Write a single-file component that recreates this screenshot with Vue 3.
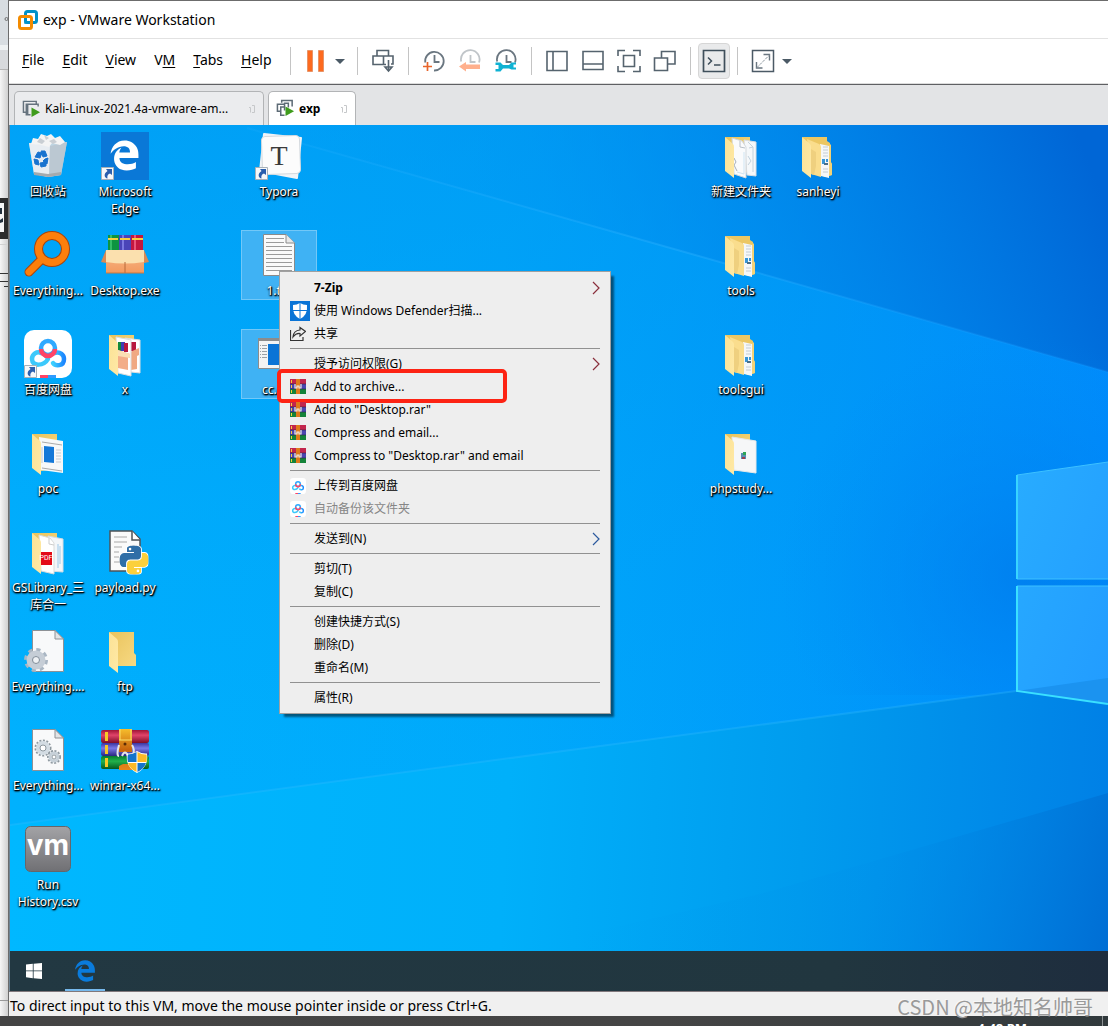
<script setup>
const menus = [
  { pre: '', key: 'F', post: 'ile' },
  { pre: '', key: 'E', post: 'dit' },
  { pre: '', key: 'V', post: 'iew' },
  { pre: 'V', key: 'M', post: '' },
  { pre: '', key: 'T', post: 'abs' },
  { pre: '', key: 'H', post: 'elp' },
]

const snapshotTools = [
  { icon: 'snap-take', label: 'Take snapshot' },
  { icon: 'snap-revert', label: 'Revert to snapshot' },
  { icon: 'snap-manage', label: 'Manage snapshots' },
]

const viewTools = [
  { icon: 'view-library', label: 'Library' },
  { icon: 'view-thumbs', label: 'Thumbnail bar' },
  { icon: 'view-full', label: 'Full screen' },
  { icon: 'view-unity', label: 'Unity' },
]

const desktopItems = [
  { col: 1, row: 1, icon: 'bin', label: '回收站' },
  { col: 1, row: 2, icon: 'everything', label: 'Everything...' },
  { col: 1, row: 3, icon: 'baidu', label: '百度网盘', shortcut: true },
  { col: 1, row: 4, icon: 'folder-poc', label: 'poc' },
  { col: 1, row: 5, icon: 'folder-pdf', label: 'GSLibrary_三库合一', mark: 'PDF' },
  { col: 1, row: 6, icon: 'ini', label: 'Everything....' },
  { col: 1, row: 7, icon: 'config', label: 'Everything...' },
  { col: 1, row: 8, icon: 'vm', label: 'Run History.csv', mark: 'vm' },
  { col: 2, row: 1, icon: 'edge-tile', label: 'Microsoft Edge', shortcut: true },
  { col: 2, row: 2, icon: 'sfx', label: 'Desktop.exe' },
  { col: 2, row: 3, icon: 'folder-x', label: 'x' },
  { col: 2, row: 5, icon: 'python', label: 'payload.py' },
  { col: 2, row: 6, icon: 'folder-ftp', label: 'ftp' },
  { col: 2, row: 7, icon: 'winrar-setup', label: 'winrar-x64...' },
  { col: 4, row: 1, icon: 'typora', label: 'Typora', shortcut: true, mark: 'T' },
  { col: 4, row: 2, icon: 'txt', label: '1.txt', selected: true },
  { col: 4, row: 3, icon: 'exe', label: 'cc.exe', selected: true },
  { col: 10, row: 1, icon: 'folder-docs', label: '新建文件夹' },
  { col: 10, row: 2, icon: 'folder-tools', label: 'tools' },
  { col: 10, row: 3, icon: 'folder-tools', label: 'toolsgui' },
  { col: 10, row: 4, icon: 'folder-php', label: 'phpstudy...' },
  { col: 11, row: 1, icon: 'folder-tools', label: 'sanheyi' },
]

const contextGroups = [
  [
    { label: '7-Zip', bold: true, sub: true },
    { label: '使用 Windows Defender扫描...', icon: 'defender', big: true },
    { label: '共享', icon: 'share' },
  ],
  [
    { label: '授予访问权限(G)', sub: true },
    { label: 'Add to archive...', icon: 'winrar', marked: true },
    { label: 'Add to "Desktop.rar"', icon: 'winrar' },
    { label: 'Compress and email...', icon: 'winrar' },
    { label: 'Compress to "Desktop.rar" and email', icon: 'winrar' },
  ],
  [
    { label: '上传到百度网盘', icon: 'baidu' },
    { label: '自动备份该文件夹', icon: 'baidu', disabled: true },
  ],
  [{ label: '发送到(N)', sub: true }],
  [{ label: '剪切(T)' }, { label: '复制(C)' }],
  [{ label: '创建快捷方式(S)' }, { label: '删除(D)' }, { label: '重命名(M)' }],
  [{ label: '属性(R)' }],
]
</script>

<template>
  <div class="screen">
    <svg class="sprite" aria-hidden="true">
      <defs>
        <linearGradient id="gFlap" x1="0" y1="0" x2="1" y2="1">
          <stop offset="0" stop-color="#fbe295" /><stop offset="1" stop-color="#ffe9a6" />
        </linearGradient>
        <linearGradient id="gBack" x1="0" y1="0" x2="1" y2="1">
          <stop offset="0" stop-color="#e9c35c" /><stop offset="1" stop-color="#f7d983" />
        </linearGradient>
        <linearGradient id="gRed" x1="0" y1="0" x2="0" y2="1">
          <stop offset="0" stop-color="#a01536" /><stop offset=".4" stop-color="#e0446a" /><stop offset="1" stop-color="#7d0d28" />
        </linearGradient>
        <linearGradient id="gBlue" x1="0" y1="0" x2="0" y2="1">
          <stop offset="0" stop-color="#3a35a0" /><stop offset=".4" stop-color="#7a78e6" /><stop offset="1" stop-color="#2a2680" />
        </linearGradient>
        <linearGradient id="gGreen" x1="0" y1="0" x2="0" y2="1">
          <stop offset="0" stop-color="#087a2c" /><stop offset=".4" stop-color="#22b14c" /><stop offset="1" stop-color="#065a20" />
        </linearGradient>
        <linearGradient id="gStrap" x1="0" y1="0" x2="0" y2="1">
          <stop offset="0" stop-color="#f6bd2c" /><stop offset=".5" stop-color="#c8650e" /><stop offset="1" stop-color="#e8861c" />
        </linearGradient>
        <linearGradient id="gVm" x1="0" y1="0" x2="0" y2="1">
          <stop offset="0" stop-color="#a3a3a6" /><stop offset="1" stop-color="#707074" />
        </linearGradient>
        <linearGradient id="gBox" x1="0" y1="0" x2="0" y2="1">
          <stop offset="0" stop-color="#f6b98c" /><stop offset="1" stop-color="#f39a5e" />
        </linearGradient>
        <linearGradient id="gBd" x1="0" y1="0" x2="1" y2="0">
          <stop offset="0" stop-color="#3dd0ff" /><stop offset="1" stop-color="#1c86ff" />
        </linearGradient>
      </defs>

      <symbol id="vmware" viewBox="0 0 20 20">
        <rect x="7.500" y="1.500" width="11" height="11" rx="2" fill="none" stroke="#0091c9" stroke-width="3" />
        <rect x="1.500" y="6.500" width="12" height="12" rx="2" fill="none" stroke="#f38b00" stroke-width="3" />
        <path d="M7.500 8V12.500H12" fill="none" stroke="#0091c9" stroke-width="2.500" />
      </symbol>
      <symbol id="tab-vm" viewBox="0 0 20 20">
        <path d="M4 14H1.500V2.500H15V5M6 16.500H4.500V5.500H17V8M6 5.500V16.500H9" fill="none" stroke="#66737e" stroke-width="1.500" />
        <path d="M10 9 19 14 10 19Z" fill="#3f9c1c" />
      </symbol>
      <symbol id="tab-vms" viewBox="0 0 20 20">
        <path d="M6 4V1.500H17V8M5 13H1.500V5.500H9M5 10V17H9M5 12V8.500H9M9 12V4.500H13V9" fill="none" stroke="#5d6b76" stroke-width="1.600" />
        <path d="M10 8 19 13 10 18Z" fill="#3f9c1c" />
      </symbol>
      <symbol id="pin" viewBox="0 0 6 10">
        <path d="M0 3.500H1.500V8.500M3 1.500H5.500V8.500H3" fill="none" stroke="#c6c8ca" />
      </symbol>

      <symbol id="pause" viewBox="0 0 24 24">
        <path d="M3.500 1.500h5v21h-5ZM14.500 1.500h5v21h-5Z" fill="#fd6a1f" stroke="#e79468" />
      </symbol>
      <symbol id="caret" viewBox="0 0 12 12"><path d="M1 4h10L6 9Z" fill="#4b5a66" /></symbol>
      <symbol id="cad" viewBox="0 0 24 24">
        <path d="M6 1.500h11.500V7H6ZM2 7h10.500v8.500H2ZM12.500 7H22v8H20M12.500 15.500H15M17.500 11v10M14 18l3.500 4 3.500-4Z" fill="none" stroke="#55636e" stroke-width="1.600" />
      </symbol>
      <symbol id="snap-take" viewBox="0 0 24 24">
        <path d="M3.200 13.500A9.300 9.300 0 1 1 12 21.500M12.500 6v7h5" fill="none" stroke="#6a7680" stroke-width="1.800" />
        <path d="M1 17.500h9M5.500 13v9" stroke="#e8652b" stroke-width="1.700" />
      </symbol>
      <symbol id="snap-revert" viewBox="0 0 24 24">
        <path d="M3.200 12.500A9.300 9.300 0 1 1 21 13.500M12.500 6v7h5" fill="none" stroke="#c0c5c9" stroke-width="1.800" />
        <path d="M1 17.500 8 13v2.500h14v4.500H8V22.500Z" fill="#ffb08d" />
      </symbol>
      <symbol id="snap-manage" viewBox="0 0 24 24">
        <path d="M3.200 12.500A9.300 9.300 0 1 1 21 13.500M12.500 6v7h5" fill="none" stroke="#6a7680" stroke-width="1.800" />
        <path d="M1.500 13.500H6.500L9 16H15L17.500 13.500H22V15.500H19.500V18.500H22V20.500H17.500L15 19.500H9L6.500 22.500H1.500V20H4.500V16H1.500Z" fill="#0fb2d3" />
      </symbol>
      <symbol id="view-library" viewBox="0 0 24 24">
        <path d="M2 2.500h20v19H2ZM8 2.500v19" fill="none" stroke="#55636e" stroke-width="1.600" />
      </symbol>
      <symbol id="view-thumbs" viewBox="0 0 24 24">
        <path d="M2 2.500h20v18H2ZM2 15h20" fill="none" stroke="#55636e" stroke-width="1.600" />
      </symbol>
      <symbol id="view-full" viewBox="0 0 24 24">
        <path d="M1 7V1.500H8M16 1.500h7V7M23 17v5.500H16M8 22.500H1V17M6.500 6.500h11v11h-11Z" fill="none" stroke="#55636e" stroke-width="1.600" />
      </symbol>
      <symbol id="view-unity" viewBox="0 0 24 24">
        <path d="M1.500 9h13v12.500h-13ZM8.500 9V2.500H22V15H15" fill="none" stroke="#55636e" stroke-width="1.600" />
      </symbol>
      <symbol id="console" viewBox="0 0 24 24">
        <path d="M1.500 1.500h21v21h-21Z" fill="none" stroke="#3f4f5b" stroke-width="1.700" />
        <path d="M6 8.500l3.500 3.500L6 15.500M12 16h6.500" fill="none" stroke="#3f4f5b" stroke-width="1.500" />
      </symbol>
      <symbol id="expand" viewBox="0 0 24 24">
        <path d="M1.500 1.500h21v21h-21Z" fill="none" stroke="#4b5a66" stroke-width="1.500" />
        <path d="M12.500 5.500H18.500V11.500M5.500 13V19H11.500" fill="none" stroke="#6a7680" stroke-width="1.400" />
        <path d="M6 18.500 18.500 6" stroke="#8d979f" stroke-dasharray="3 1" />
      </symbol>

      <symbol id="edge" viewBox="0 0 512 512">
        <path fill="currentColor" d="M486.290 243.670c0-44.030-7.760-84.460-28.810-122.400C416.500 47.880 343.910 8 258.890 8 119 7.720 40.620 113.210 26.040 227.690c42.420-61.310 117.070-121.380 220.370-125 0 0 109.670 0 99.420 105H170c6.370-37.390 18.550-58.990 34.340-78.930-75.050 34.900-121.850 96.100-120.750 188.320.830 71.450 50.130 144.840 120.750 172 83.350 31.840 192.770 7.200 240.130-21.330V363.310c-80.870 56.490-270.870 60.920-272.260-67.570h314.210v-52.070z" />
      </symbol>
      <symbol id="winflag" viewBox="0 0 16 16">
        <path fill="#fff" d="M0 1.500 6.800.800V7.500H0ZM7.600.700 16 0V7.500H7.600ZM0 8.300H6.800V15.200L0 14.300ZM7.600 8.300H16V16L7.600 15.300Z" />
      </symbol>
      <symbol id="shortcut" viewBox="0 0 13 13">
        <path d="M.500.500h12v12H.500Z" fill="#f6f8fa" stroke="#a9b1b8" />
        <path d="M5 2h6v6L9 6.500C6.500 7.500 6 9 6.500 11.500 3.500 11 2 7 6.500 4Z" fill="#2b5fae" />
      </symbol>

      <symbol id="bin" viewBox="0 0 48 48">
        <path d="M5 11 43 10 37 43 24 45 10 42Z" fill="#d4dbe1" opacity=".9" />
        <path d="M5 11 26 14 25 45 10 42Z" fill="#eef1f4" opacity=".85" />
        <path d="M26 14 43 10 37 43 25 45Z" fill="#b9c3cc" opacity=".75" />
        <path d="M7 12 9 6 14 7 17 2 23 4 27 2 31 6 36 4 41 10 36 13 28 11 25 15 17 13Z" fill="#f4f4f4" />
        <path d="M13 10 16 6 21 9 18 12ZM25 9 30 7 33 10 29 12ZM20 3 25 6 22 8Z" fill="#c9ced3" />
        <path d="M10 43 24 45 37 43 37 40 24 42 10 40Z" fill="#a5aaae" />
        <path d="M11 25 14 20 18 21 16 26ZM17 19h4l2 5-4 1ZM10 27l4 1 1 5-4-1ZM16 31l6-1v4l-5 1ZM21 27l3-1-1 6-4-3Z" fill="#1873cf" stroke="#1873cf" />
      </symbol>
      <symbol id="everything" viewBox="0 0 48 48">
        <path d="M18 28 5 41" stroke="#a9440a" stroke-width="9" stroke-linecap="round" />
        <circle cx="28" cy="18" r="13.500" fill="none" stroke="#a9440a" stroke-width="9" />
        <path d="M18 28 5 41" stroke="#fd7f0b" stroke-width="7" stroke-linecap="round" />
        <circle cx="28" cy="18" r="13.500" fill="none" stroke="#fd7f0b" stroke-width="7" />
      </symbol>
      <symbol id="baidu" viewBox="0 0 48 48">
        <rect width="48" height="48" rx="10" fill="#fff" />
        <path d="M24 29C20 36 8 37 8 29c0-5 5-8 9-6" fill="none" stroke="#3cc9fb" stroke-width="4.500" stroke-linecap="round" />
        <path d="M31 23c5-2 9 2 9 6 0 8-9 7-11 4" fill="none" stroke="url(#gBd)" stroke-width="4.500" stroke-linecap="round" />
        <path d="M17 22q6 6 7 7" stroke="#3cc9fb" stroke-width="3" fill="none" />
        <circle cx="24" cy="18" r="7" fill="none" stroke="#2fa9ff" stroke-width="4.500" />
        <path d="M17 19a7 7 0 0 0 14 0" fill="none" stroke="#ff4466" stroke-width="4.500" />
        <path d="M16 45h8v3h-8Z" fill="#ff4466" /><path d="M24 45h8v3h-8Z" fill="#2f9bff" />
      </symbol>

      <symbol id="folder-back" viewBox="0 0 48 48"><path d="M8 5H33V40L17 42Z" fill="url(#gBack)" /></symbol>
      <symbol id="folder-flap" viewBox="0 0 48 48"><path d="M8 5 16 12Q17 13 17 15V46L8 39Z" fill="url(#gFlap)" /></symbol>
      <symbol id="folder-ftp" viewBox="0 0 48 48">
        <path d="M8 5H33V26L35 28V39H17Z" fill="url(#gBack)" /><use href="#folder-flap" />
      </symbol>
      <symbol id="folder-poc" viewBox="0 0 48 48">
        <use href="#folder-back" />
        <path d="M15 8 39 12V44L17 41Z" fill="#f7f8f9" />
        <path d="M18 13 38 16M18 39 38 42" stroke="#aaa" />
        <path d="M20 17 30 18V34L20 33Z" fill="#1478d8" />
        <path d="M18 18V34M32 21h5M32 24h5M32 27h5M32 30h5M32 33h5" stroke="#c7cbd0" />
        <use href="#folder-flap" />
      </symbol>
      <symbol id="folder-pdf" viewBox="0 0 48 48">
        <use href="#folder-back" />
        <path d="M24 8 39 11V44L25 43Z" fill="#f3f6f9" stroke="#d5dbe2" />
        <path d="M34 16v24M36 18v18" stroke="#9cc8e8" />
        <path d="M15 7 26 10 30 15V46L17 43Z" fill="#fff" stroke="#dadada" />
        <path d="M25 10v6l5 1" fill="none" stroke="#ccc" />
        <path d="M16 24h12v13H16Z" fill="#e30a17" />
        <use href="#folder-flap" />
      </symbol>
      <symbol id="folder-x" viewBox="0 0 48 48">
        <use href="#folder-back" />
        <path d="M24 8 39 10V43L30 42Z" fill="#fff" stroke="#ddd" />
        <path d="M30 12h5v9h-5Z" fill="#b8183e" /><path d="M29 22 38 18V25L36 26V39L30 40Z" fill="#f0a983" />
        <path d="M15 7 30 10V46L17 43Z" fill="#fff" stroke="#ddd" />
        <path d="M17 12h4v9h-4Z" fill="#138a3b" /><path d="M20 12h4v9h-4Z" fill="#403cb4" /><path d="M23 13h4v9h-4Z" fill="#b8183e" />
        <path d="M17 20 29 24V28L27 27V40L17 38Z" fill="#f3ae88" /><path d="M17 20 29 24V28L17 26Z" fill="#fbe0b4" />
        <use href="#folder-flap" />
      </symbol>
      <symbol id="folder-docs" viewBox="0 0 48 48">
        <use href="#folder-back" />
        <path d="M27 8 39 10V44L30 43Z" fill="#f5f8fa" stroke="#d8dde2" />
        <path d="M31 10l5 5-4 1M36 15v25M31 24l3 5-3 4" fill="none" stroke="#c3d2dd" />
        <path d="M15 6 25 9 29 15V46L17 42Z" fill="#fafbfc" stroke="#d3d8dc" />
        <path d="M23 9v6l5 1" fill="none" stroke="#b8c0c8" />
        <path d="M17 26l2 4-2 3 3 6" fill="none" stroke="#a8b0b8" />
        <path d="M20 40l7 2V20" fill="none" stroke="#cfe4f2" />
        <use href="#folder-flap" />
      </symbol>
      <symbol id="folder-tools" viewBox="0 0 48 48">
        <path d="M8 5H33V9L36 11V30L38 32V43L30 45Z" fill="#ecc763" />
        <path d="M26 12 35 14V46L27 44Z" fill="#f5f7f8" />
        <path d="M29 15h5M29 18h5M29 21h5M29 24h5M29 37h5M29 40h5" stroke="#c4cdd4" />
        <path d="M28 27h3v5h-3ZM32 27h2v3h-2Z" fill="#3996d4" /><path d="M30 31h4v2h-4Z" fill="#4b6f88" />
        <path d="M35 14 37 12V30L38 32V43L35 44Z" fill="#f3d277" />
        <path d="M13 7 25 12Q27 13 27 15V45L17 42Z" fill="#fadd8d" />
        <path d="M17 17 22 20V34L20 43 17 42Z" fill="#efd07f" />
        <use href="#folder-flap" />
      </symbol>
      <symbol id="folder-php" viewBox="0 0 48 48">
        <use href="#folder-back" />
        <path d="M15 8 39 12V44L17 41Z" fill="#f6f7f8" stroke="#e6e8ea" />
        <path d="M24 24h5v6h-5Z" fill="#5c8fb0" /><path d="M26 23h3v3h-3Z" fill="#2fa557" /><path d="M25 28h3v2h-3Z" fill="#a03c50" />
        <use href="#folder-flap" />
      </symbol>

      <symbol id="txt" viewBox="0 0 48 48">
        <path d="M8.500 3.500H31L39.500 12V44.500H8.500Z" fill="#fafafa" stroke="#8a8a8a" />
        <path d="M31 3.500V12H39.500" fill="#e8e8e8" stroke="#8a8a8a" />
        <path d="M11 7.500h18M11 11.500h18M11 15.500h26M11 19.500h26M11 23.500h26M11 27.500h26M11 31.500h26M11 35.500h26M11 39.500h26" stroke="#9b9b9b" />
      </symbol>
      <symbol id="exe" viewBox="0 0 48 48">
        <path d="M3.500 8.500h41v30h-41Z" fill="#f3f3f3" stroke="#8c8c8c" /><path d="M3 8h42v3H3Z" fill="#8c8c8c" />
        <path d="M5 15.500h7M5 18.500h7M5 21.500h7M5 24.500h7M5 27.500h7" stroke="#9aa0a6" stroke-dasharray="1 1 5" />
        <path d="M13 14h19v21H13Z" fill="#0a74d6" /><path d="M34 16h8M34 20h8M34 24h8" stroke="#b5b9bd" />
      </symbol>
      <symbol id="doc" viewBox="0 0 48 48">
        <path d="M8.500 3.500H31L39.500 12V44.500H8.500Z" fill="#f8f9fa" stroke="#8d9196" />
        <path d="M31 3.500V12H39.500Z" fill="#e2e4e6" stroke="#8d9196" />
      </symbol>
      <symbol id="ini" viewBox="0 0 48 48">
        <use href="#doc" />
        <circle cx="12" cy="33" r="10" fill="none" stroke="#a9b6c3" stroke-width="4" stroke-dasharray="4 3.850" />
        <circle cx="12" cy="33" r="6.500" fill="none" stroke="#c5cdd6" stroke-width="6" />
        <circle cx="12" cy="33" r="3.500" fill="#eef1f4" stroke="#7f8b98" />
      </symbol>
      <symbol id="config" viewBox="0 0 48 48">
        <use href="#doc" />
        <circle cx="19" cy="22" r="7.500" fill="none" stroke="#8e989f" stroke-width="2" stroke-dasharray="2 1.500" />
        <circle cx="19" cy="22" r="5" fill="#fff" stroke="#d3dce3" stroke-width="4" />
        <circle cx="19" cy="22" r="3" fill="#fff" stroke="#8e989f" />
        <circle cx="30" cy="31" r="6" fill="none" stroke="#8e989f" stroke-width="2" stroke-dasharray="2 1.500" />
        <circle cx="30" cy="31" r="4" fill="#fff" stroke="#c6d0d8" stroke-width="3" />
        <circle cx="30" cy="31" r="2" fill="#fff" stroke="#8e989f" />
      </symbol>
      <symbol id="vm" viewBox="0 0 48 48">
        <rect x="1.500" y="1.500" width="45" height="45" rx="5" fill="url(#gVm)" stroke="#66666a" />
      </symbol>
      <symbol id="edge-tile" viewBox="0 0 48 48">
        <path d="M0 0h48v48H0Z" fill="#0a78d7" />
        <svg x="8" y="7" width="31" height="33" viewBox="0 0 512 512" color="#fff"><use href="#edge" /></svg>
      </symbol>
      <symbol id="sfx" viewBox="0 0 48 48">
        <path d="M7 4h11v18H7Z" fill="#0d9440" /><path d="M9 4h2v18H9Z" fill="#35bd65" />
        <path d="M18 4h12v18H18Z" fill="#4a44b8" /><path d="M21 4h2v18h-2Z" fill="#7a78e0" />
        <path d="M30 4h12v18H30Z" fill="#c3173f" /><path d="M33 4h2v18h-2Z" fill="#ea5578" />
        <path d="M7 8h10M19 8h10M31 8h11" stroke="#f9cf3e" stroke-width="2" />
        <path d="M5 19H43V42H5Z" fill="url(#gBox)" /><path d="M5 19H43V31Q24 34 5 31Z" fill="#fbe0ae" />
        <path d="M5 19 0 31 5 32ZM43 19 48 31 43 32Z" fill="#d98a55" />
        <path d="M24 31V42" stroke="#b86a3a" /><path d="M5 42H43" stroke="#c9773f" />
      </symbol>
      <symbol id="py-half" viewBox="0 0 24 24">
        <path d="M14.250.180l.900.200.730.260.590.300.450.320.340.340.250.340.160.330.100.300.040.260.020.200-.010.130V8.500l-.050.630-.130.550-.210.460-.260.380-.300.310-.330.250-.350.190-.350.140-.330.100-.300.070-.260.040-.210.020H8.770l-.690.050-.590.140-.500.220-.410.270-.330.320-.270.350-.200.360-.150.370-.100.350-.070.320-.040.270-.020.210v3.060H3.170l-.210-.030-.280-.070-.320-.120-.350-.180-.360-.260-.360-.360-.350-.460-.320-.590-.280-.730-.210-.880-.140-1.050-.050-1.230.060-1.220.160-1.040.240-.870.320-.710.360-.570.400-.440.420-.330.420-.240.400-.160.360-.100.320-.050.240-.010h.160l.060.010h8.160v-.830H6.180l-.010-2.750-.020-.370.050-.340.110-.310.170-.280.250-.260.310-.230.380-.200.440-.180.510-.150.580-.120.640-.100.710-.060.770-.040.840-.020 1.270.050z" />
        <circle cx="8.700" cy="2.900" r="1.100" fill="#fff" stroke="none" />
      </symbol>
      <symbol id="python" viewBox="0 0 48 48">
        <path d="M9 3H31L39 11V43H9Z" fill="#fafafa" stroke="#4f5357" stroke-width="1.500" />
        <path d="M31 3V12H39" fill="#fff" stroke="#4f5357" stroke-width="1.500" />
        <path d="M13 9h13M13 14h13M13 19h8M13 24h5M13 29h5M13 34h7" stroke="#c3c3c3" stroke-width="1.500" />
        <svg x="18" y="17" width="30" height="30" viewBox="-0.500 -0.500 25 25" overflow="visible">
          <g stroke="#fff" stroke-width="1.500"><use href="#py-half" width="24" height="24" /><use href="#py-half" width="24" height="24" transform="rotate(180 12 12)" /></g>
          <use href="#py-half" width="24" height="24" fill="#2f6ea7" />
          <use href="#py-half" width="24" height="24" fill="#fbd03c" transform="rotate(180 12 12)" />
        </svg>
      </symbol>
      <symbol id="typora" viewBox="0 0 48 48">
        <path d="M9 2 46 6 42 46 5 39Z" fill="#f1f4f7" stroke="#f1f4f7" stroke-width="2" stroke-linejoin="round" />
        <rect x="7" y="4" width="38" height="38" rx="4" fill="#fcfcfc" stroke="#d4d9de" transform="rotate(-2 26 23)" />
      </symbol>
      <symbol id="winrar-setup" viewBox="0 0 48 48">
        <rect y="4" width="48" height="13" rx="2" fill="url(#gRed)" />
        <rect y="17" width="48" height="13" rx="2" fill="url(#gBlue)" />
        <rect y="30" width="48" height="13" rx="2" fill="url(#gGreen)" />
        <path d="M4 6h3v9H4ZM4 19h3v9H4ZM4 32h3v9H4Z" fill="#f9c825" />
        <path d="M18 3h13v23H18ZM18 40l4-2h9v6H18Z" fill="url(#gStrap)" />
        <path d="M19 3V14M30 3V14M18 14H31" stroke="#fce06a" /><circle cx="24" cy="18" r="1.500" fill="#5b2c06" />
        <path d="M18 19q-3 11 0 11M31 19q3 5 1 9M21 30q3-7 6 0" fill="none" stroke="#e5e5e8" stroke-width="2" />
        <path d="M36 25q5 3 10 2.500Q48 41 36 47 24 41 26 27.500 32 28 36 25Z" fill="#fff" />
        <path d="M35.500 26V36H27Q26 32 27 28.500 32 28 35.500 26ZM36.500 37H45Q43 43 36.500 46Z" fill="#1473cc" />
        <path d="M36.500 26Q41 29 45.500 28.500 46 32 45.500 36H36.500ZM35.500 37V46Q29 43 27 37Z" fill="#fdb927" />
      </symbol>

      <symbol id="winrar" viewBox="0 0 16 16">
        <path d="M0 0h16v5H0Z" fill="#c2254d" /><path d="M0 5h16v5H0Z" fill="#4b46b0" /><path d="M0 10h16v5H0Z" fill="#14833a" />
        <path d="M1 1h1v3H1ZM1 6h1v3H1ZM1 11h1v3H1Z" fill="#f8cf3a" />
        <path d="M0 5h16M0 10h16" stroke="#2c2340" stroke-width=".6" />
        <path d="M6 0h4v15H6Z" fill="#e07a1a" /><path d="M5 5v4h2V7h2v2h2V5" fill="none" stroke="#f2ece4" stroke-width="1.200" />
      </symbol>
      <symbol id="defender" viewBox="0 0 20 20">
        <path d="M0 0h20v20H0Z" fill="#0a74d6" />
        <path d="M10 2Q13 4 17 4 18 14 10 18 2 14 3 4 7 4 10 2Z" fill="#fff" /><path d="M10 2V18M2 9.500H18" stroke="#0a74d6" />
      </symbol>
      <symbol id="share" viewBox="0 0 16 16">
        <path d="M.500 4V14.500H13V11M10 1.500 15.500 5.500 10 10V7.500Q6 7 3 11 3.500 4.500 10 4Z" fill="none" stroke="#333" stroke-width="1.200" />
      </symbol>
      <symbol id="chevron" viewBox="0 0 8 14"><path d="M1 1 7 7 1 13" fill="none" stroke="currentColor" stroke-width="1.200" /></symbol>
    </svg>

    <div class="middle">
      <aside class="behind" aria-hidden="true">
        <svg width="8" height="1016" viewBox="0 0 8 1016">
          <path d="M0 0h8v45H0Z" fill="#d8dde1" /><path d="M0 45h8v5H0Z" fill="#eef1f2" />
          <path d="M0 50h8v19H0Z" fill="#d8dadd" /><path d="M0 69.500h8" stroke="#b5b5b5" />
          <circle cx="6.500" cy="19" r="1.500" fill="none" stroke="#6e6e6e" />
          <path d="M0 198h8v41H0Z" fill="#2c2c2c" /><path d="M0 203h4v29H0Z" fill="#f5f5f5" />
          <path d="M0 208h2v6H0ZM0 220l3-2v4l-3 1Z" fill="#22303c" />
          <path d="M0 244.500h8" stroke="#d2d2d2" /><path d="M0 273.500h8M0 281.500h8M4 286.500h4" stroke="#333" />
          <path d="M0 1000.500h8" stroke="#999" />
        </svg>
      </aside>

      <main class="window">
        <header class="titlebar">
          <svg width="20" height="20"><use href="#vmware" /></svg>
          <h1>exp - VMware Workstation</h1>
        </header>

        <div class="menubar">
          <nav class="menus">
            <button v-for="m in menus" :key="m.key" type="button">{{ m.pre }}<u>{{ m.key }}</u>{{ m.post }}</button>
          </nav>
          <i class="sep"></i>
          <button class="tool" type="button" aria-label="Suspend"><svg><use href="#pause" /></svg></button>
          <button class="drop" type="button" aria-label="Power options"><svg><use href="#caret" /></svg></button>
          <i class="sep"></i>
          <button class="tool" type="button" aria-label="Send Ctrl+Alt+Del"><svg><use href="#cad" /></svg></button>
          <i class="sep"></i>
          <button v-for="t in snapshotTools" :key="t.icon" class="tool" type="button" :aria-label="t.label"><svg><use :href="'#' + t.icon" /></svg></button>
          <i class="sep"></i>
          <button v-for="t in viewTools" :key="t.icon" class="tool" type="button" :aria-label="t.label"><svg><use :href="'#' + t.icon" /></svg></button>
          <i class="sep"></i>
          <button class="tool pressed" type="button" aria-label="Console view" aria-pressed="true"><svg><use href="#console" /></svg></button>
          <i class="sep"></i>
          <button class="tool" type="button" aria-label="Stretch guest"><svg><use href="#expand" /></svg></button>
          <button class="drop" type="button" aria-label="Stretch options"><svg><use href="#caret" /></svg></button>
        </div>

        <div class="tabs" role="tablist">
          <button class="tab wide" type="button" role="tab" aria-selected="false">
            <svg class="tab-icon"><use href="#tab-vm" /></svg><span>Kali-Linux-2021.4a-vmware-am...</span><svg class="pin"><use href="#pin" /></svg>
          </button>
          <button class="tab active" type="button" role="tab" aria-selected="true">
            <svg class="tab-icon"><use href="#tab-vms" /></svg><span>exp</span><svg class="pin"><use href="#pin" /></svg>
          </button>
        </div>

        <section class="guest">
          <div class="desktop">
            <svg class="wallpaper" viewBox="0 0 1098 826" preserveAspectRatio="xMaxYMid slice" aria-hidden="true">
              <defs>
                <linearGradient id="wBase" x1="0" y1="0" x2="1" y2="0">
                  <stop offset="0" stop-color="#00b1fe" /><stop offset=".45" stop-color="#00aafb" /><stop offset=".75" stop-color="#009afa" /><stop offset="1" stop-color="#008aff" />
                </linearGradient>
                <linearGradient id="wTopBand" x1="0" y1="0" x2="0" y2="1">
                  <stop offset="0" stop-color="#0090ee" stop-opacity=".45" /><stop offset=".45" stop-color="#0090f0" stop-opacity=".15" /><stop offset=".8" stop-color="#0090f0" stop-opacity="0" />
                </linearGradient>
                <linearGradient id="wUpper" gradientUnits="userSpaceOnUse" x1="250" y1="260" x2="1040" y2="-60">
                  <stop offset="0" stop-color="#009ef6" stop-opacity="0" /><stop offset=".4" stop-color="#0092f0" stop-opacity=".35" /><stop offset=".7" stop-color="#0080e6" stop-opacity=".75" /><stop offset="1" stop-color="#0066d6" />
                </linearGradient>
                <linearGradient id="wBeam" x1="0" y1="0" x2="1" y2="0">
                  <stop offset="0" stop-color="#2eb2ff" stop-opacity=".15" /><stop offset=".5" stop-color="#2eb2ff" stop-opacity=".4" /><stop offset="1" stop-color="#1a9aff" stop-opacity=".2" />
                </linearGradient>
                <linearGradient id="wLower" gradientUnits="userSpaceOnUse" x1="0" y1="700" x2="1098" y2="760">
                  <stop offset="0" stop-color="#00b8ff" /><stop offset=".45" stop-color="#00b0fa" /><stop offset=".72" stop-color="#009cee" /><stop offset="1" stop-color="#0080e6" />
                </linearGradient>
                <linearGradient id="wCorner" gradientUnits="userSpaceOnUse" x1="600" y1="700" x2="1098" y2="826">
                  <stop offset="0" stop-color="#0098ee" stop-opacity="0" /><stop offset=".5" stop-color="#0090ea" stop-opacity=".25" /><stop offset="1" stop-color="#006ed4" />
                </linearGradient>
                <radialGradient id="wShade" cx="1010" cy="450" r="240" gradientUnits="userSpaceOnUse">
                  <stop offset="0" stop-color="#0078e8" stop-opacity=".6" /><stop offset="1" stop-color="#0088f0" stop-opacity="0" />
                </radialGradient>
                <linearGradient id="wPane" x1="0" y1="0" x2="1" y2="1">
                  <stop offset="0" stop-color="#28acff" /><stop offset="1" stop-color="#229cff" />
                </linearGradient>
              </defs>
              <path d="M0 0H1098V826H0Z" fill="url(#wBase)" />
              <path d="M0 0H1098V826H0Z" fill="url(#wTopBand)" />
              <path d="M226 0H1098V247Z" fill="url(#wUpper)" />
              <path d="M237 3 1098 247" stroke="url(#wBeam)" stroke-width="2" />
              <path d="M700 200H1098V570H700Z" fill="url(#wShade)" />
              <path d="M0 700 598 620 1006 566 1098 554V826H0Z" fill="url(#wLower)" />
              <path d="M0 700 598 620 1006 566" fill="none" stroke="#35bcff" stroke-width="2" opacity=".3" />
              <path d="M500 826 750 769 1098 668V826Z" fill="url(#wCorner)" />
              <path d="M1007 350 1098 337V454H1007ZM1007 461H1098V579L1007 566Z" fill="url(#wPane)" />
              <path d="M1007 566 1098 553V579Z" fill="#1b93f0" />
              <path d="M1098 337 1007 350V454H1098M1098 461H1007" fill="none" stroke="#3cc0ff" />
              <path d="M1007 461V566L1098 579" fill="none" stroke="#3ae0ff" stroke-width="2" />
              <path d="M1007 350V454" stroke="#38d4ff" stroke-width="2" />
            </svg>

            <ul class="icons">
              <li v-for="(item, i) in desktopItems" :key="i" :class="{ selected: item.selected }" :style="{ gridColumn: item.col, gridRow: item.row }">
                <span class="art">
                  <svg class="big"><use :href="'#' + item.icon" /></svg>
                  <b v-if="item.mark" class="mark" :class="item.icon">{{ item.mark }}</b>
                  <svg v-if="item.shortcut" class="arrow"><use href="#shortcut" /></svg>
                </span>
                <span class="name">{{ item.label }}</span>
              </li>
            </ul>

            <div class="context" role="menu">
              <div v-for="(group, g) in contextGroups" :key="g" class="group" role="group">
                <button v-for="item in group" :key="item.label" type="button" role="menuitem" :disabled="item.disabled" :class="{ bold: item.bold, marked: item.marked }">
                  <span class="glyph"><svg v-if="item.icon" :class="{ shield: item.big }"><use :href="'#' + item.icon" /></svg></span>
                  <span>{{ item.label }}</span>
                  <svg v-if="item.sub" class="chevron"><use href="#chevron" /></svg>
                </button>
              </div>
            </div>
          </div>

          <div class="taskbar">
            <button type="button" aria-label="Start"><svg width="16" height="16"><use href="#winflag" /></svg></button>
            <button class="running" type="button" aria-label="Microsoft Edge"><svg width="22" height="22"><use href="#edge" /></svg></button>
          </div>
        </section>

        <footer class="status">To direct input to this VM, move the mouse pointer inside or press Ctrl+G.</footer>
      </main>
    </div>

    <div class="hostbar"><time>4:48 PM</time></div>
    <p class="watermark">CSDN @本地知名帅哥</p>
  </div>
</template>

<style>
body {
  margin: 0;
}
</style>

<style scoped>
.screen {
  position: relative;
  display: flex;
  flex-direction: column;
  min-height: 100vh;
  overflow: hidden;
  font-family: "Noto Sans", "Noto Sans CJK SC", sans-serif;
  font-size: 14px;
  color: #000;
}
.sprite {
  position: absolute;
  width: 0;
  height: 0;
}
button {
  padding: 0;
  border: 0;
  background: none;
  font: inherit;
  color: inherit;
}
svg {
  display: block;
  flex: none;
}
.middle {
  display: flex;
  flex: 1;
}
.behind {
  width: 8px;
  background: linear-gradient(90deg, #f6f6f6, #d0d0d0);
}
.window {
  display: flex;
  flex: 1;
  flex-direction: column;
  min-width: 0;
  border-left: 1px solid #6c6c6c;
  border-top: 1px solid #6c6c6c;
  background: #fff;
}
.titlebar {
  display: flex;
  align-items: center;
  gap: 5px;
  height: 37px;
  padding-left: 9px;
  border-bottom: 1px solid #e2e2e2;
}
.titlebar h1 {
  margin: 0;
  font-size: 14px;
  font-weight: 400;
}
.menubar {
  display: flex;
  align-items: center;
  height: 44px;
  border-bottom: 1px solid #dcdcdc;
}
.menus {
  display: flex;
  flex: 0 0 277px;
  margin-bottom: 2px;
  padding-left: 4px;
}
.menus button {
  padding: 0 9px;
  line-height: 24px;
}
.menus u {
  text-underline-offset: 2px;
}
.sep {
  flex: none;
  width: 1px;
  height: 28px;
  margin: 0 7px;
  background: #c4c4c4;
}
.menus + .sep {
  margin-left: 0;
}
.tool {
  display: flex;
  flex: none;
  align-items: center;
  justify-content: center;
  width: 36px;
  height: 36px;
}
.tool svg {
  width: 24px;
  height: 24px;
}
.pressed {
  box-sizing: border-box;
  width: 32px;
  border: 1px solid #d6d6d6;
  border-radius: 4px;
  background: #e9eaeb;
}
.drop {
  flex: none;
  width: 16px;
}
.drop svg {
  width: 12px;
  height: 12px;
}
.tabs {
  display: flex;
  align-items: flex-end;
  gap: 4px;
  height: 40px;
  padding-left: 5px;
  border-top: 1px solid #5f6063;
  background: #e3e4e6;
}
.tab {
  display: flex;
  box-sizing: border-box;
  align-items: center;
  gap: 4px;
  width: 88px;
  height: 34px;
  padding: 0 8px 0 7px;
  border: 1px solid #b2b4b6;
  border-bottom: 0;
  border-radius: 5px 5px 0 0;
  background: #ebecee;
  font-size: 12px;
}
.tab.wide {
  width: 250px;
}
.tab.active {
  background: #fff;
  font-weight: 700;
}
.tab-icon {
  width: 19px;
  height: 19px;
}
.pin {
  width: 6px;
  height: 10px;
  margin-left: auto;
}
.guest {
  display: flex;
  flex: 1;
  flex-direction: column;
  border-left: 1px solid #6c8494;
}
.desktop {
  position: relative;
  flex: 1;
  background: #00aefc;
}
.wallpaper {
  position: absolute;
  inset: 0;
  width: 100%;
  height: 100%;
}
.icons {
  position: relative;
  display: grid;
  grid-template-columns: repeat(14, 76px);
  grid-auto-rows: 99px;
  column-gap: 1px;
  margin: 0;
  padding: 6px 0 0;
  list-style: none;
  overflow: hidden;
}
.icons li {
  display: flex;
  flex-direction: column;
  align-items: center;
  align-self: start;
  gap: 3px;
  border: 1px solid transparent;
}
.icons .selected {
  border-color: #72c8f8;
  background: #3fb2f4;
}
.art {
  position: relative;
  width: 48px;
  height: 48px;
}
.big {
  width: 48px;
  height: 48px;
}
.arrow {
  position: absolute;
  left: 0;
  bottom: 0;
  width: 13px;
  height: 13px;
}
.mark {
  position: absolute;
  inset: 0;
  font-weight: 400;
  line-height: 48px;
  text-align: center;
}
.mark.typora {
  font-family: "Liberation Serif", serif;
  font-size: 28px;
  color: #3a3a3a;
}
.mark.vm {
  font-family: Inter, sans-serif;
  font-size: 28px;
  font-weight: 700;
  line-height: 40px;
  color: #fff;
}
.mark.folder-pdf {
  padding-right: 4px;
  font-family: Roboto, sans-serif;
  font-size: 7px;
  line-height: 61px;
  color: #fff;
}
.name {
  font-size: 12px;
  line-height: 17px;
  text-align: center;
  color: #fff;
  text-shadow: 1px 1px 2px #000, 0 1px 2px #000, 1px 1px 1px #000;
}
.context {
  position: absolute;
  top: 146px;
  left: 269px;
  box-sizing: border-box;
  width: 332px;
  padding: 4px 10px;
  border: 1px solid #a0a0a0;
  background: #eee;
  box-shadow: 4px 4px 2px -1px rgba(0, 0, 0, 0.5);
  font-size: 12px;
  line-height: 17px;
}
.group + .group::before {
  content: "";
  display: block;
  height: 1px;
  margin: 3px 0;
  background: #919191;
}
.context button {
  position: relative;
  display: flex;
  align-items: center;
  width: 100%;
  height: 23px;
  white-space: pre;
}
.context button:disabled {
  color: #868686;
}
.context .bold {
  font-weight: 700;
}
.glyph {
  width: 24px;
}
.glyph svg {
  width: 16px;
  height: 16px;
}
.glyph .shield {
  width: 20px;
  height: 20px;
}
.chevron {
  width: 8px;
  height: 14px;
  margin-left: auto;
  color: #8a2f3c;
}
.group:nth-child(4) .chevron {
  color: #2c5a9e;
}
.marked::after {
  content: "";
  position: absolute;
  top: -6px;
  left: -13px;
  box-sizing: border-box;
  width: 230px;
  height: 34px;
  border: 4px solid #fd2314;
  border-radius: 5px;
}
.taskbar {
  display: flex;
  gap: 3px;
  height: 40px;
  background: linear-gradient(90deg, #223842, #21363f 75%, #1e2d3e);
}
.taskbar button {
  display: flex;
  box-sizing: border-box;
  align-items: center;
  justify-content: center;
  width: 48px;
}
.taskbar .running {
  color: #0a7bdc;
  background: linear-gradient(#76b9ed, #76b9ed) bottom / 40px 2px no-repeat;
}
.status {
  height: 24px;
  padding-left: 1px;
  border-top: 1px solid #80787c;
  background: #f0f0f0;
  line-height: 28px;
  white-space: nowrap;
}
.hostbar {
  display: flex;
  justify-content: flex-end;
  height: 10px;
  overflow: hidden;
  background: linear-gradient(90deg, #444, #454545 60%, #31393c);
}
.hostbar time {
  padding-right: 75px;
  margin-right: 5px;
  border-right: 1px solid #8d9294;
  font-size: 13px;
  font-weight: 700;
  line-height: 24px;
  color: #fff;
}
.watermark {
  position: absolute;
  right: 15px;
  bottom: 4px;
  margin: 0;
  font-family: "Noto Sans CJK SC", sans-serif;
  font-size: 20px;
  line-height: 30px;
  color: #9a9a9a;
  text-shadow: -1px -1px 0 #f7f7f7;
}
</style>
